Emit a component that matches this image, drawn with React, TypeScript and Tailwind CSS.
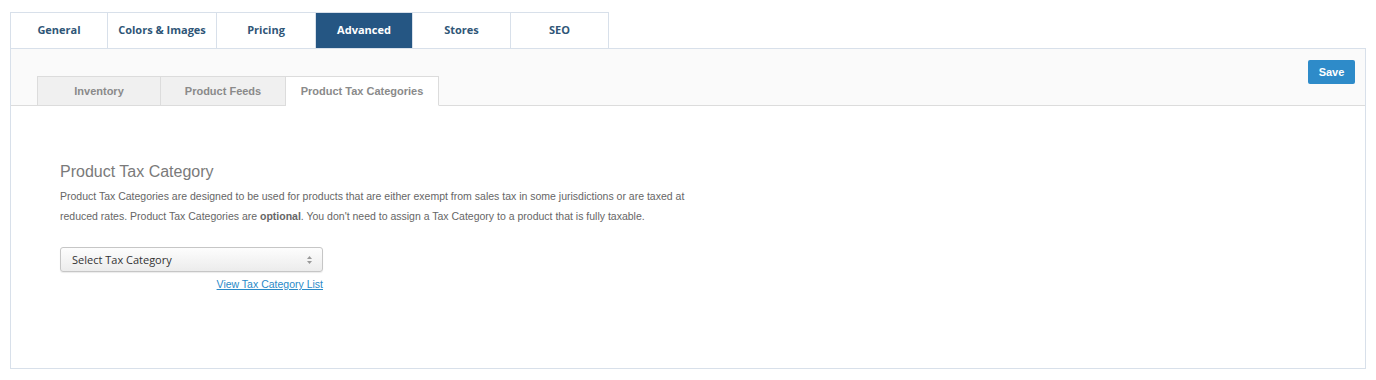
import React, { useState } from 'react';

const mainTabs = ['General', 'Colors & Images', 'Pricing', 'Advanced', 'Stores', 'SEO'];
const mainWidths = ['w-[98px]', 'w-[109px]', 'w-[99px]', 'w-[97px]', 'w-[98px]', 'w-[98px]'];
const subTabs = ['Inventory', 'Product Feeds', 'Product Tax Categories'];
const subWidths = ['w-[124px]', 'w-[125px]', 'w-[153px]'];

export default function App() {
  const [tab, setTab] = useState('Advanced');
  const [sub, setSub] = useState('Product Tax Categories');

  return (
    <div className="min-h-[380px] bg-white pt-3 pl-[10px] pr-[10px] font-['Liberation_Sans',Arial,sans-serif]">
      {/* top tabs */}
      <div className="flex h-9">
        {mainTabs.map((t, i) => (
          <button
            key={t}
            onClick={() => setTab(t)}
            className={`${mainWidths[i]} h-9 border-t border-r border-[#d8e0ea] font-['Open_Sans',sans-serif] text-[11px] font-bold ${
              i === 0 ? 'border-l' : ''
            } ${tab === t ? 'bg-[#255683] text-white border-[#255683]' : 'bg-white text-[#2f5677]'}`}
          >
            {t}
          </button>
        ))}
      </div>

      {/* panel */}
      <div className="h-[321px] border border-[#d8e0ea] bg-white">
        <div className="flex h-[57px] items-end justify-between border-b border-[#dcdcdc] bg-[#fafafa] pl-[26px] pr-[10px]">
          <div className="flex -mb-px">
            {subTabs.map((s, i) => (
              <button
                key={s}
                onClick={() => setSub(s)}
                className={`${subWidths[i]} h-[30px] border-t border-r border-[#dcdcdc] text-[11px] font-bold text-[#8a8a8a] ${
                  i === 0 ? 'border-l' : ''
                } ${sub === s ? 'bg-white border-b border-b-white' : 'bg-[#f0f0f0] border-b border-b-[#dcdcdc]'}`}
              >
                {s}
              </button>
            ))}
          </div>
          <button className="mb-[21px] h-6 w-[47px] rounded-[2px] bg-[#2e8bc9] text-[11px] font-bold text-white">
            Save
          </button>
        </div>

        <div className="pl-[49px] pt-[56px]">
          <h2 className="text-[16px] leading-[19px] text-[#7a7a7a]">Product Tax Category</h2>
          <p className="mt-[5px] w-[636px] text-[10.5px] leading-[20px] text-[#666]">
            Product Tax Categories are designed to be used for products that are either exempt from sales tax in some
            jurisdictions or are taxed at reduced rates. Product Tax Categories are <b>optional</b>. You don't need to
            assign a Tax Category to a product that is fully taxable.
          </p>
          <div className="mt-[21px] flex w-[263px] flex-col items-end">
            <div className="relative h-[25px] w-full rounded-[3px] border border-[#c6c6c6] bg-gradient-to-b from-[#fdfdfd] to-[#ececec] shadow-[0_1px_1px_rgba(0,0,0,0.08)]">
              <span className="absolute left-[11px] top-[4px] font-['Open_Sans',sans-serif] text-[11px] text-[#333]">
                Select Tax Category
              </span>
              <svg className="absolute right-[10px] top-[8px]" width="5" height="8" viewBox="0 0 5 8">
                <path d="M2.5 0 L5 3 H0 Z" fill="#999" />
                <path d="M2.5 8 L5 5 H0 Z" fill="#999" />
              </svg>
            </div>
            <a href="#" className="mt-[5px] text-[10.5px] text-[#2a8ac8] underline">
              View Tax Category List
            </a>
          </div>
        </div>
      </div>
    </div>
  );
}
